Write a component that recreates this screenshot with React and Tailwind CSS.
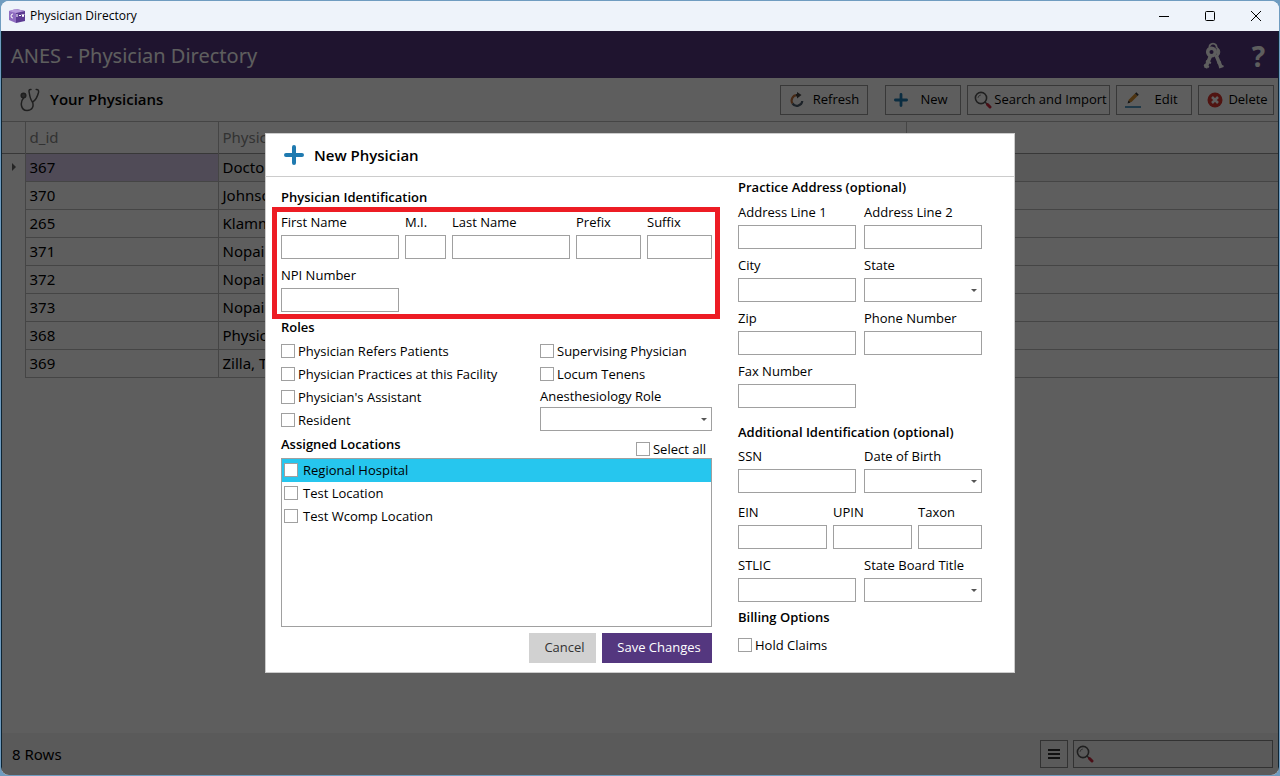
import React from "react";
import { twMerge } from "tailwind-merge";

const rows = [
  { id: "367", name: "Doctor", active: true },
  { id: "370", name: "Johnson" },
  { id: "265", name: "Klamm" },
  { id: "371", name: "Nopain" },
  { id: "372", name: "Nopain" },
  { id: "373", name: "Nopain" },
  { id: "368", name: "Physic" },
  { id: "369", name: "Zilla, T" },
];

const roles = [
  "Physician Refers Patients",
  "Physician Practices at this Facility",
  "Physician's Assistant",
  "Resident",
];

const locations = ["Regional Hospital", "Test Location", "Test Wcomp Location"];

function PlusIcon({ className }) {
  return (
    <svg viewBox="0 0 20 20" className={className} fill="none" stroke="#1f7ab0" strokeWidth="4" strokeLinecap="round">
      <path d="M10 2v16M2 10h16" />
    </svg>
  );
}

function SearchIcon({ className }) {
  return (
    <svg viewBox="0 0 18 18" className={className} fill="none" strokeLinecap="round">
      <circle cx="7" cy="7" r="5.6" stroke="#555" strokeWidth="1.6" />
      <path d="M4 6.5A3 3 0 0 1 6.5 4" stroke="#888" />
      <path d="M11 11l2 2" stroke="#555" strokeWidth="1.5" />
      <path d="M13.5 13.5l2.500 2.500" stroke="#c8283c" strokeWidth="3" />
    </svg>
  );
}

function RefreshIcon() {
  return (
    <svg viewBox="0 0 16 16" className="size-4" fill="none" strokeWidth="2.200">
      <path d="M8 3.200A5.400 5.400 0 0 0 3.500 11.500" stroke="#c0713a" />
      <path d="M3.500 11.500A5.400 5.400 0 0 0 13.300 9" stroke="#4c5c6c" />
      <path d="M7 3.200h2" stroke="#444" />
      <path d="M8 0l4.500 3L8 6.500z" fill="#444" />
    </svg>
  );
}

function EditIcon() {
  return (
    <svg viewBox="0 0 16 16" className="size-4">
      <path d="M3 10.500l1-3L10 1.500l2.500 2.500-6 6z" fill="#d08a2c" />
      <path d="M10 1.500l1.300-1.300 2.500 2.500L12.500 4zM2.500 11.500l1-3 2 2z" fill="#3a3a3a" />
      <path d="M0 15h16" stroke="#1f7ab0" strokeWidth="1.500" />
    </svg>
  );
}

function DeleteIcon() {
  return (
    <svg viewBox="0 0 16 16" className="size-4">
      <circle cx="8" cy="8" r="7.500" fill="#d9362e" />
      <path d="M5 5l6 6M11 5l-6 6" stroke="#fff" strokeWidth="2.500" />
    </svg>
  );
}

function StethoscopeIcon() {
  return (
    <svg viewBox="0 0 20 24" className="h-6 w-5" fill="none" stroke="#555" strokeWidth="1.500" strokeLinecap="round">
      <circle cx="3.500" cy="7.500" r="2.300" fill="#777" />
      <path d="M3.500 10C0 14 .5 22.500 7 22.500c5.500 0 7-4.500 5.500-8.500" />
      <path d="M11 1.500c-2-.3-2.300 1-1.800 3 .6 4 1.400 7.500 3.300 9.500 3-1.500 5-5.500 6-9.500.4-2-.3-3.300-2.300-3" />
    </svg>
  );
}

function KeysIcon() {
  return (
    <svg viewBox="0 0 22 28" className="h-7 w-[22px]" fill="none" stroke="#fff">
      <path d="M7.500 6a3.600 3.600 0 1 1 7 0" strokeWidth="1.800" />
      <path d="M14 13l5 12" strokeWidth="3.500" />
      <path d="M17 25.500l4.500-1.500M15.500 21l3.500-1" strokeWidth="2" />
      <path d="M15 5.500a5 5 0 0 1 0 9z" fill="#fff" />
      <path d="M8.500 14L3.500 26" strokeWidth="3.500" />
      <path d="M2 23l5 2M4 19l5 2" strokeWidth="2" />
      <circle cx="9.500" cy="10" r="3.800" strokeWidth="3.500" />
    </svg>
  );
}

function AppLogo() {
  return (
    <svg viewBox="0 0 16 16" className="size-4">
      <path d="M0 3l7-2v14l-7-3z" fill="#8f6cc0" />
      <path d="M7 1l9 2v10l-9 2z" fill="#5c3a92" />
      <path d="M0 3l7-2 9 2-9 2z" fill="#b79bdc" />
      <path d="M4 6a2 2 0 1 0 0 4M8 6v3M10 7.500h2M13 6l1 3 1-3" stroke="#fff" fill="none" />
    </svg>
  );
}

function ToolButton({ icon, className, children }) {
  return (
    <button className={twMerge("flex h-[30px] items-center border border-[#999] text-[13px] text-black", className)}>
      {icon}
      <span className="flex-1 text-center">{children}</span>
    </button>
  );
}

function Field({ label, className }) {
  return (
    <label className={twMerge("flex flex-col gap-[3px]", className)}>
      <span className="leading-5 whitespace-nowrap">{label}</span>
      <input type="text" className="h-6 w-full border border-[#a0a0a0] bg-white px-1 outline-none" />
    </label>
  );
}

function SelectField({ label, className }) {
  return (
    <label className={twMerge("flex flex-col gap-[3px]", className)}>
      <span className="leading-5 whitespace-nowrap">{label}</span>
      <span className="relative block">
        <select className="block h-6 w-full appearance-none border border-[#a0a0a0] bg-white px-1 outline-none">
          <option></option>
        </select>
        <svg viewBox="0 0 6 3" className="pointer-events-none absolute top-[11px] right-[5px] h-[3px] w-[6px]" fill="#555">
          <path d="M0 0h6L3 3z" />
        </svg>
      </span>
    </label>
  );
}

function Check({ label, className }) {
  return (
    <label className={twMerge("flex h-[23px] items-center gap-[3px]", className)}>
      <input type="checkbox" className="mb-[2px] size-[14px] shrink-0 appearance-none border border-[#a0a0a0] bg-white checked:bg-[#54377f]" />
      <span className="whitespace-nowrap">{label}</span>
    </label>
  );
}

function SectionTitle({ className, children }) {
  return <h3 className={twMerge("leading-5 font-semibold", className)}>{children}</h3>;
}

function NewPhysicianDialog() {
  return (
    <div
      role="dialog"
      aria-label="New Physician"
      className="w-[750px] border border-[#ccc] bg-white font-['Open_Sans','Noto_Sans',sans-serif] text-[13px] text-black"
    >
      <header className="flex h-[43px] items-center gap-[10px] border-b border-[#ccc] pl-[18px]">
        <PlusIcon className="size-5" />
        <h2 className="text-[15px] font-semibold">New Physician</h2>
      </header>

      <div className="flex">
        <div className="w-[462px] pt-[10px] pr-2 pb-[9px] pl-[6px]">
          <SectionTitle className="pl-[9px]">Physician Identification</SectionTitle>
          <div className="flex flex-col gap-[6px] border-[5px] border-[#ed1c24] pr-[3px] pb-[2px] pl-1">
            <div className="flex gap-[6px]">
              <Field label="First Name" className="w-[118px]" />
              <Field label="M.I." className="w-[41px]" />
              <Field label="Last Name" className="w-[118px]" />
              <Field label="Prefix" className="w-[65px]" />
              <Field label="Suffix" className="w-[65px]" />
            </div>
            <Field label="NPI Number" className="w-[118px]" />
          </div>

          <div className="pr-2 pl-[9px]">
            <SectionTitle className="leading-4">Roles</SectionTitle>
            <div className="flex justify-between pt-[5px]">
              <div>
                {roles.map((role) => (
                  <Check key={role} label={role} />
                ))}
              </div>
              <div className="w-[172px]">
                <Check label="Supervising Physician" />
                <Check label="Locum Tenens" />
                <SelectField label="Anesthesiology Role" className="gap-px" />
              </div>
            </div>

            <div className="flex h-[26px] justify-between">
              <SectionTitle className="leading-6">Assigned Locations</SectionTitle>
              <Check label="Select all" className="self-end pt-[6px] pr-[6px]" />
            </div>
            <ul className="h-[169px] border border-[#a0a0a0]">
              {locations.map((location, i) => (
                <li key={location} className={twMerge("pl-[2px]", i === 0 && "bg-[#26c6ee]")}>
                  <Check label={location} className="gap-[5px]" />
                </li>
              ))}
            </ul>
            <div className="flex justify-end gap-[6px] pt-[6px]">
              <button className="h-[30px] w-[67px] bg-[#d1d1d1] pl-1 text-[#333]">Cancel</button>
              <button className="h-[30px] w-[110px] bg-[#54377f] pl-1 text-white">Save Changes</button>
            </div>
          </div>
        </div>

        <div className="flex-1 pr-8 pl-[10px]">
          <SectionTitle>Practice Address (optional)</SectionTitle>
          <div className="grid grid-cols-2 gap-x-2 gap-y-[6px] pt-[5px]">
            <Field label="Address Line 1" />
            <Field label="Address Line 2" />
            <Field label="City" />
            <SelectField label="State" />
            <Field label="Zip" />
            <Field label="Phone Number" />
            <Field label="Fax Number" />
          </div>

          <SectionTitle className="pt-[14px]">Additional Identification (optional)</SectionTitle>
          <div className="grid grid-cols-2 gap-x-2 pt-1">
            <Field label="SSN" />
            <SelectField label="Date of Birth" />
          </div>
          <div className="flex gap-[6px] pt-[9px]">
            <Field label="EIN" className="w-[89px]" />
            <Field label="UPIN" className="w-[79px]" />
            <Field label="Taxon" className="min-w-0 flex-1" />
          </div>
          <div className="grid grid-cols-2 gap-x-2 pt-[6px]">
            <Field label="STLIC" />
            <SelectField label="State Board Title" />
          </div>

          <SectionTitle className="pt-[5px]">Billing Options</SectionTitle>
          <Check label="Hold Claims" className="mt-[7px]" />
        </div>
      </div>
    </div>
  );
}

function App() {
  return (
    <div className="h-screen bg-[#6f9cc0] p-px font-['Noto_Sans','Open_Sans',sans-serif]">
      <div className="flex h-full flex-col overflow-hidden rounded-lg bg-white">
        <div className="flex h-[30px] shrink-0 items-center bg-[#eef3fa] pl-2">
          <AppLogo />
          <span className="flex-1 pl-[5px] font-['Open_Sans','Noto_Sans',sans-serif] text-xs text-black">
            Physician Directory
          </span>
          <div className="flex gap-9 pr-[18px]">
            <button aria-label="Minimize">
              <svg viewBox="0 0 10 10" className="size-[10px]" stroke="#000"><path d="M0 5.500h10" /></svg>
            </button>
            <button aria-label="Maximize">
              <svg viewBox="0 0 10 10" className="size-[10px]" fill="none" stroke="#000"><rect x=".5" y=".5" width="9" height="9" rx="1" /></svg>
            </button>
            <button aria-label="Close">
              <svg viewBox="0 0 10 10" className="size-[10px]" stroke="#000"><path d="M0 0l10 10M10 0L0 10" /></svg>
            </button>
          </div>
        </div>

        <div className="relative flex flex-1 flex-col border-x border-[#0e2433]">
          <div className="flex h-[47px] items-center justify-between bg-[#54377f] pt-[2px] pr-[13px] pl-[9px] text-white">
            <h1 className="text-xl">ANES - Physician Directory</h1>
            <div className="flex items-center gap-7">
              <button aria-label="Keys"><KeysIcon /></button>
              <button className="text-[28px] leading-8 font-bold" aria-label="Help">?</button>
            </div>
          </div>

          <div className="flex h-11 items-center border-b border-[#bbb] pr-1 pl-[18px]">
            <StethoscopeIcon />
            <h2 className="flex-1 pl-[10px] font-['Open_Sans','Noto_Sans',sans-serif] text-[15px] font-semibold">
              Your Physicians
            </h2>
            <div className="flex gap-[6px] font-['Open_Sans','Noto_Sans',sans-serif]">
              <ToolButton icon={<RefreshIcon />} className="mr-[11px] w-[88px] pl-2">Refresh</ToolButton>
              <ToolButton icon={<PlusIcon className="size-[14px]" />} className="w-[76px] pl-2">New</ToolButton>
              <ToolButton icon={<SearchIcon className="size-[18px]" />} className="w-[143px] pl-[6px]">Search and Import</ToolButton>
              <ToolButton icon={<EditIcon />} className="w-[76px] pl-2">Edit</ToolButton>
              <ToolButton icon={<DeleteIcon />} className="w-[76px] pl-2">Delete</ToolButton>
            </div>
          </div>

          <table className="w-full table-fixed border-collapse text-left text-[15px] text-black">
            <colgroup>
              <col className="w-[23px]" />
              <col className="w-[193px]" />
              <col className="w-[688px]" />
              <col />
            </colgroup>
            <thead>
              <tr className="h-[31px] border-b border-[#999] text-[#888]">
                <th className="border-r border-[#bbb]"></th>
                <th className="border-r border-[#bbb] pl-1 font-normal">d_id</th>
                <th className="border-r border-[#bbb] pl-1 font-normal">Physic</th>
                <th></th>
              </tr>
            </thead>
            <tbody>
              {rows.map((row) => (
                <tr key={row.id} className={twMerge("h-7", row.active && "bg-[#f0f0f0]")}>
                  <td className="border-r border-[#bbb] bg-white">
                    {row.active && (
                      <svg viewBox="0 0 4 8" className="ml-[10px] h-2 w-1" fill="#666"><path d="M0 0l4 4-4 4z" /></svg>
                    )}
                  </td>
                  <td className={twMerge("border-r border-b border-[#bbb] pl-1", row.active && "bg-[#d8cbec]")}>{row.id}</td>
                  <td className="border-b border-[#bbb] pl-1">{row.name}</td>
                  <td className="border-b border-[#bbb]"></td>
                </tr>
              ))}
            </tbody>
          </table>

          <footer className="mt-auto flex h-[42px] items-center bg-[#f5f5f5] pr-[5px] pl-[10px]">
            <span className="flex-1 text-[15px] text-black">8 Rows</span>
            <button aria-label="Menu" className="mr-[5px] grid size-7 place-items-center border border-[#888]">
              <svg viewBox="0 0 12 12" className="size-3" stroke="#333" strokeWidth="2"><path d="M0 2h12M0 6h12M0 10h12" /></svg>
            </button>
            <label className="flex h-7 w-[200px] items-center border border-[#888] pl-[2px]">
              <SearchIcon className="size-[18px]" />
              <input type="search" aria-label="Search rows" className="h-full min-w-0 flex-1 bg-transparent px-1 outline-none" />
            </label>
          </footer>

          <div className="absolute inset-0 flex items-center justify-center bg-black/63">
            <NewPhysicianDialog />
          </div>
        </div>
      </div>
    </div>
  );
}

export default App;
